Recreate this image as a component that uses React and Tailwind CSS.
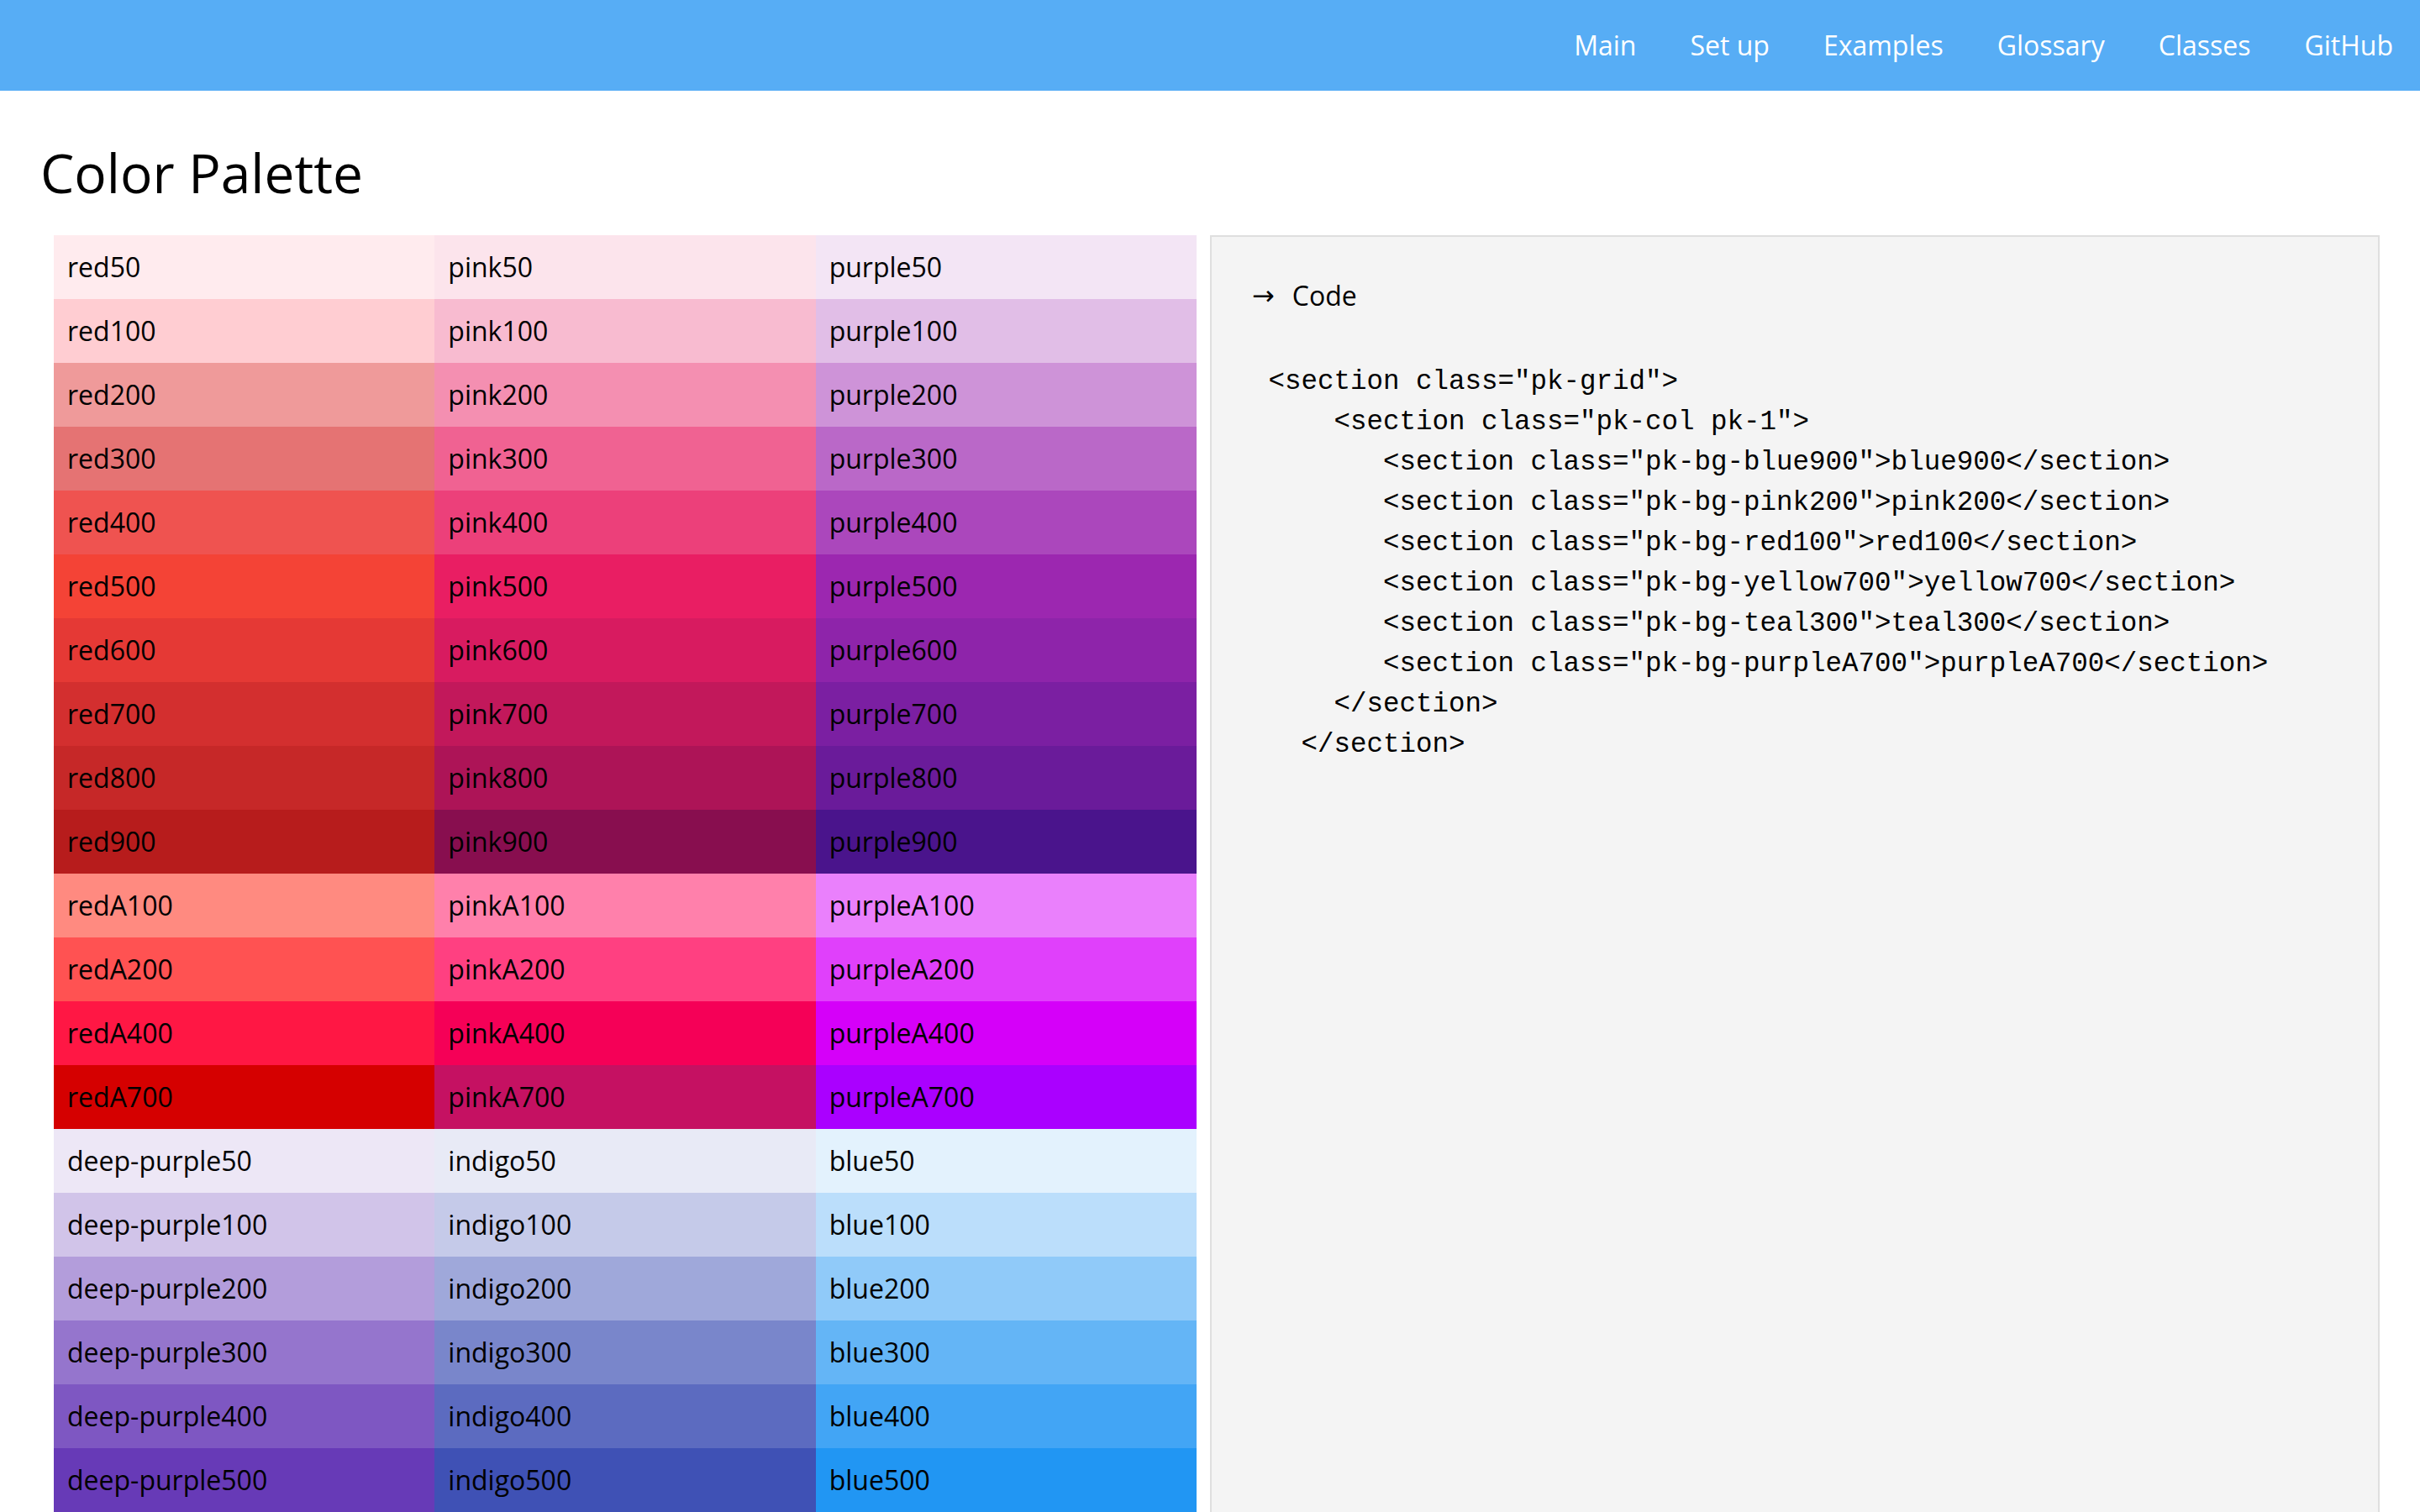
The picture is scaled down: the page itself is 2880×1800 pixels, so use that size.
const links = ['Main', 'Set up', 'Examples', 'Glossary', 'Classes', 'GitHub']

const first = [
  ['red50', 'bg-[#ffebee]', 'pink50', 'bg-[#fce4ec]', 'purple50', 'bg-[#f3e5f5]'],
  ['red100', 'bg-[#ffcdd2]', 'pink100', 'bg-[#f8bbd0]', 'purple100', 'bg-[#e1bee7]'],
  ['red200', 'bg-[#ef9a9a]', 'pink200', 'bg-[#f48fb1]', 'purple200', 'bg-[#ce93d8]'],
  ['red300', 'bg-[#e57373]', 'pink300', 'bg-[#f06292]', 'purple300', 'bg-[#ba68c8]'],
  ['red400', 'bg-[#ef5350]', 'pink400', 'bg-[#ec407a]', 'purple400', 'bg-[#ab47bc]'],
  ['red500', 'bg-[#f44336]', 'pink500', 'bg-[#e91e63]', 'purple500', 'bg-[#9c27b0]'],
  ['red600', 'bg-[#e53935]', 'pink600', 'bg-[#d81b60]', 'purple600', 'bg-[#8e24aa]'],
  ['red700', 'bg-[#d32f2f]', 'pink700', 'bg-[#c2185b]', 'purple700', 'bg-[#7b1fa2]'],
  ['red800', 'bg-[#c62828]', 'pink800', 'bg-[#ad1457]', 'purple800', 'bg-[#6a1b9a]'],
  ['red900', 'bg-[#b71c1c]', 'pink900', 'bg-[#880e4f]', 'purple900', 'bg-[#4a148c]'],
  ['redA100', 'bg-[#ff8a80]', 'pinkA100', 'bg-[#ff80ab]', 'purpleA100', 'bg-[#ea80fc]'],
  ['redA200', 'bg-[#ff5252]', 'pinkA200', 'bg-[#ff4081]', 'purpleA200', 'bg-[#e040fb]'],
  ['redA400', 'bg-[#ff1744]', 'pinkA400', 'bg-[#f50057]', 'purpleA400', 'bg-[#d500f9]'],
  ['redA700', 'bg-[#d50000]', 'pinkA700', 'bg-[#c51162]', 'purpleA700', 'bg-[#aa00ff]'],
  ['deep-purple50', 'bg-[#ede7f6]', 'indigo50', 'bg-[#e8eaf6]', 'blue50', 'bg-[#e3f2fd]'],
  ['deep-purple100', 'bg-[#d1c4e9]', 'indigo100', 'bg-[#c5cae9]', 'blue100', 'bg-[#bbdefb]'],
  ['deep-purple200', 'bg-[#b39ddb]', 'indigo200', 'bg-[#9fa8da]', 'blue200', 'bg-[#90caf9]'],
  ['deep-purple300', 'bg-[#9575cd]', 'indigo300', 'bg-[#7986cb]', 'blue300', 'bg-[#64b5f6]'],
  ['deep-purple400', 'bg-[#7e57c2]', 'indigo400', 'bg-[#5c6bc0]', 'blue400', 'bg-[#42a5f5]'],
  ['deep-purple500', 'bg-[#673ab7]', 'indigo500', 'bg-[#3f51b5]', 'blue500', 'bg-[#2196f3]'],
  ['deep-purple600', 'bg-[#5e35b1]', 'indigo600', 'bg-[#3949ab]', 'blue600', 'bg-[#1e88e5]'],
  ['deep-purple700', 'bg-[#512da8]', 'indigo700', 'bg-[#303f9f]', 'blue700', 'bg-[#1976d2]'],
  ['deep-purple800', 'bg-[#4527a0]', 'indigo800', 'bg-[#283593]', 'blue800', 'bg-[#1565c0]'],
  ['deep-purple900', 'bg-[#311b92]', 'indigo900', 'bg-[#1a237e]', 'blue900', 'bg-[#0d47a1]'],
]

const code = [
  ' <section class="pk-grid">',
  '     <section class="pk-col pk-1">',
  '        <section class="pk-bg-blue900">blue900</section>',
  '        <section class="pk-bg-pink200">pink200</section>',
  '        <section class="pk-bg-red100">red100</section>',
  '        <section class="pk-bg-yellow700">yellow700</section>',
  '        <section class="pk-bg-teal300">teal300</section>',
  '        <section class="pk-bg-purpleA700">purpleA700</section>',
  '     </section>',
  '   </section>',
]

function Cell({ name, bg }) {
  return (
    <div className={`${bg} h-[76px] flex items-center pl-4 text-[32px] leading-[44px] text-black`}>
      {name}
    </div>
  )
}

export default function App() {
  return (
    <div className="min-h-screen bg-white font-['Open_Sans',sans-serif] text-black">
      <header className="h-[108px] bg-[#57adf5] flex items-center justify-end">
        <nav className="flex">
          {links.map(l => (
            <a key={l} href="#" className="px-8 text-[32px] leading-[44px] text-white">
              {l}
            </a>
          ))}
        </nav>
      </header>
      <main className="px-12">
        <h1 className="pt-[54px] text-[64px] leading-[87px] font-normal">Color Palette</h1>
        <div className="mt-[31px] grid grid-cols-2">
          <div className="px-4">
            <div className="grid grid-cols-3">
              {first.map(r => (
                <div key={r[0]} className="contents">
                  <Cell name={r[0]} bg={r[1]} />
                  <Cell name={r[2]} bg={r[3]} />
                  <Cell name={r[4]} bg={r[5]} />
                </div>
              ))}
            </div>
          </div>
          <div className="border-2 border-[#dfdfdf] bg-[#f4f4f4] pl-12 pt-[48px]">
            <p className="flex items-center text-[32px] leading-[44px]">
              <span className="font-['DejaVu_Sans',sans-serif] text-[32px] mr-[21px]">→</span>
              <span>Code</span>
            </p>
            <pre className="mt-[57px] font-['Liberation_Mono',monospace] text-[32.5px] leading-[48px] text-black whitespace-pre">
              {code.join('\n')}
            </pre>
          </div>
        </div>
      </main>
    </div>
  )
}
